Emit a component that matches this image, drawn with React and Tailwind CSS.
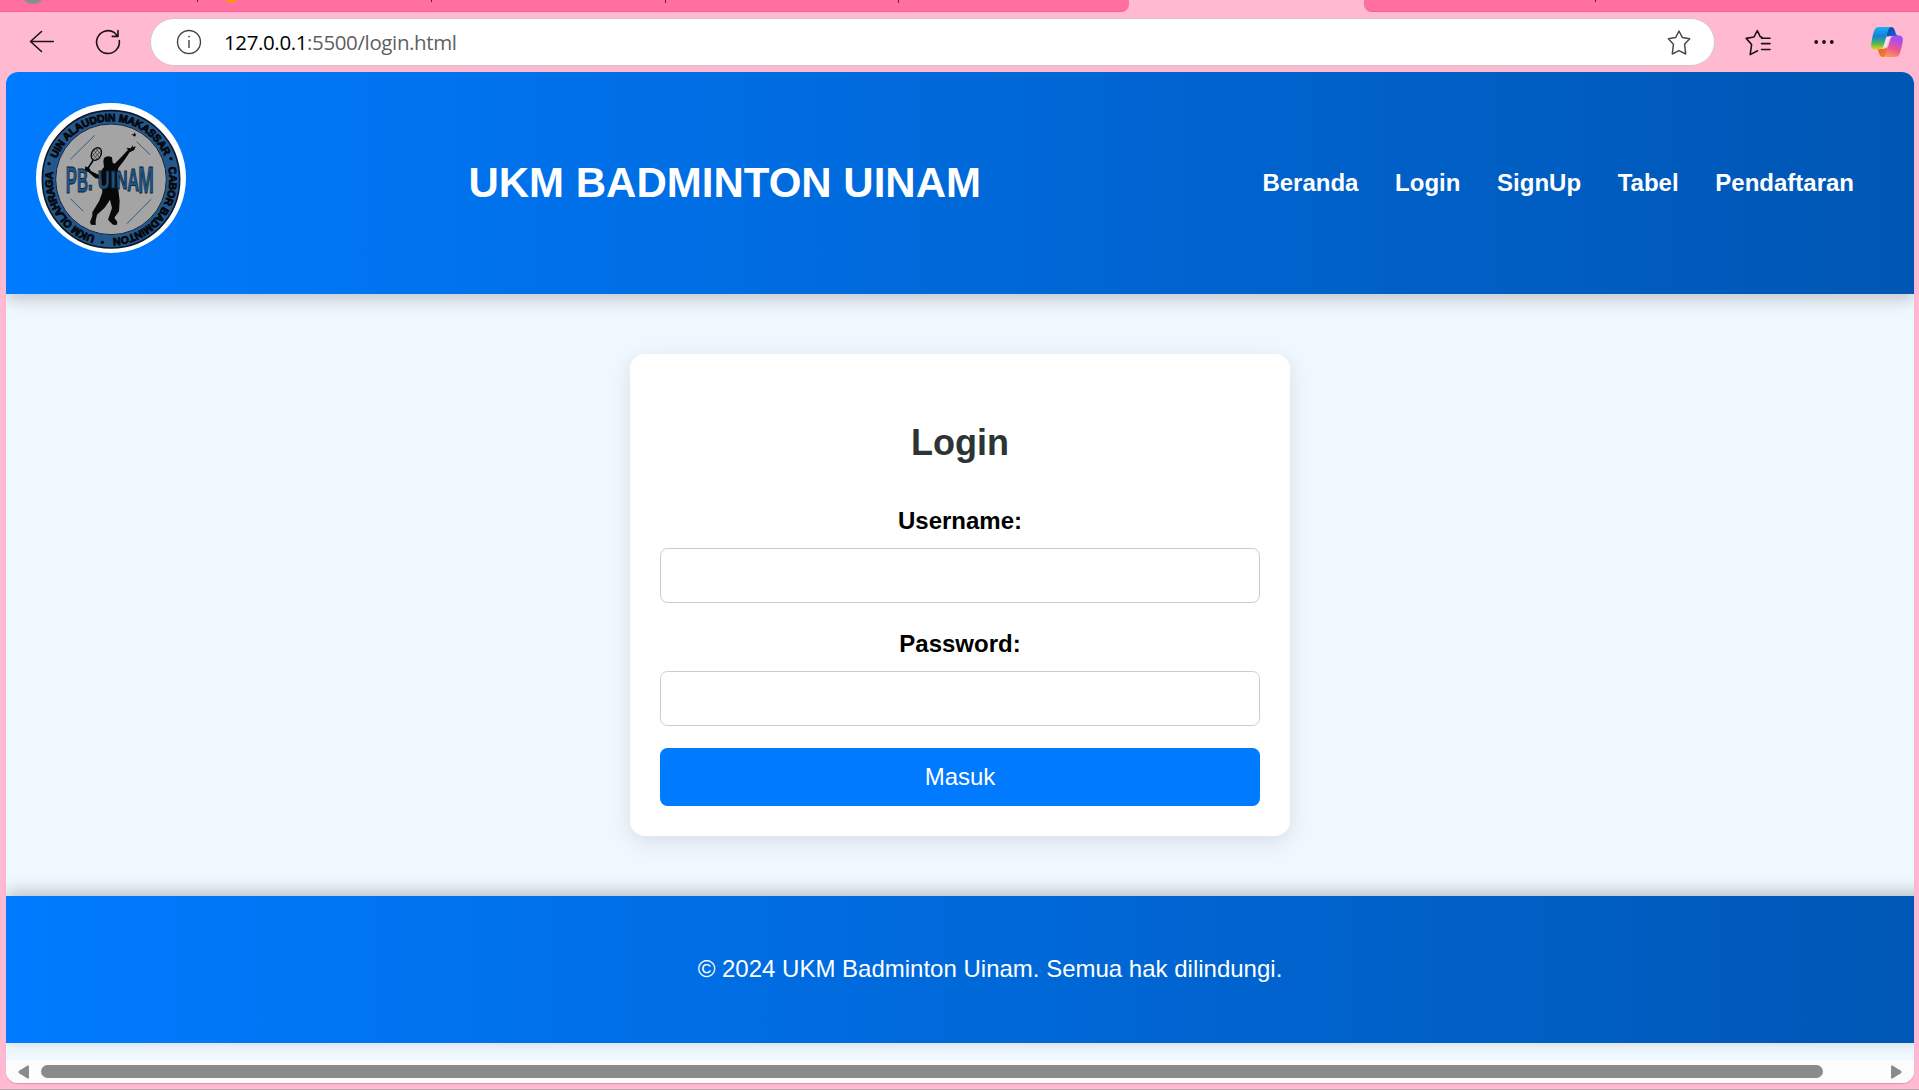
const navItems = ["Beranda", "Login", "SignUp", "Tabel", "Pendaftaran"];

function TabStrip() {
  return (
    <div className="flex h-[12px] shrink-0 justify-between overflow-hidden">
      <div className="relative h-full w-[1129px] rounded-br-[8px] border-b border-[#ff5c93] bg-[#ff6fa0]">
        <span className="absolute left-[21px] top-[-20px] size-[24px] rounded-full bg-[#8c8c8c]" />
        <span className="absolute left-[225px] top-[-9px] size-[12px] rounded-full bg-[#ff9800]" />
        <span className="absolute left-[197px] top-0 h-[2px] w-px bg-[#5a2035]" />
        <span className="absolute left-[431px] top-0 h-[2px] w-px bg-[#5a2035]" />
        <span className="absolute left-[665px] top-0 h-[3px] w-px bg-[#5a2035]" />
        <span className="absolute left-[898px] top-0 h-[3px] w-px bg-[#5a2035]" />
      </div>
      <div className="relative h-full w-[555px] rounded-bl-[8px] border-b border-[#ff5c93] bg-[#ff6fa0]">
        <span className="absolute left-[231px] top-0 h-[2px] w-px bg-[#5a2035]" />
      </div>
    </div>
  );
}

const STAR = "M10 1.2 L13 7 L19.4 8.1 L14.9 12.9 L15.9 21.4 L10 18.4 L4.1 21.4 L5.1 12.9 L0.7 8.1 L7 7 Z";

function CopilotIcon() {
  return (
    <svg viewBox="0 0 34 32" className="h-[32px] w-[34px]">
      <defs>
        <linearGradient id="cpA" x1="0" y1="0" x2="0" y2="1">
          <stop offset="0" stopColor="#18b4ee" />
          <stop offset="0.4" stopColor="#157fd9" />
          <stop offset="0.72" stopColor="#45b860" />
          <stop offset="1" stopColor="#f2cf10" />
        </linearGradient>
        <linearGradient id="cpB" x1="0.3" y1="0" x2="0" y2="1">
          <stop offset="0" stopColor="#a04ef5" />
          <stop offset="0.5" stopColor="#ee5496" />
          <stop offset="1" stopColor="#ffa83e" />
        </linearGradient>
        <linearGradient id="cpC" x1="0" y1="0" x2="1" y2="1">
          <stop offset="0" stopColor="#0a3fae" />
          <stop offset="1" stopColor="#1a6be8" />
        </linearGradient>
        <linearGradient id="cpD" x1="0" y1="0" x2="1" y2="1">
          <stop offset="0" stopColor="#e8502e" />
          <stop offset="1" stopColor="#f58a3c" />
        </linearGradient>
      </defs>
      <path d="M15 1 H21 Q24 1 25 5 L26 8 Q27 10 29 10 H21 Q18 10 17 13 Z" fill="url(#cpC)" />
      <path d="M19 31 H13 Q10 31 9 27 L8.5 25 Q8 23 6 23 H13 Q16 23 17 20 Z" fill="url(#cpD)" />
      <path d="M9 1 H22 Q19 1 18 5 L13.5 20 Q12.5 23.5 9 23.5 H5 Q0.5 23.5 1.2 18 Q2 11 4 5 Q5.3 1 9 1 Z" fill="url(#cpA)" />
      <path d="M25 31 H12 Q15 31 16 27 L20.5 13 Q21.5 9.5 25 9.5 H29 Q33.5 9.5 32.8 15 Q32 21 30 27 Q28.7 31 25 31 Z" fill="url(#cpB)" />
      <path d="M17 10.5 H20.8 Q19.8 11.5 19.3 13 L16.7 21.5 H13.4 Z" fill="#ffe1ec" />
    </svg>
  );
}

function Toolbar() {
  return (
    <div className="flex h-[60px] shrink-0 items-start pl-[28px] pr-[15px] pt-[6px]">
      <svg viewBox="0 0 28 28" className="mt-[10px] size-[28px]" fill="none" stroke="#1b1114" strokeWidth="1.6" strokeLinecap="round" strokeLinejoin="round">
        <path d="M25.3 13.5 H2.5 M13.5 3.5 L2.5 13.5 L13.5 23.5" />
      </svg>
      <svg viewBox="0 0 28 28" className="ml-[38px] mt-[10px] size-[28px]" fill="none" stroke="#1b1114" strokeWidth="1.6" strokeLinecap="round" strokeLinejoin="round">
        <path d="M25.3 12.5 A11.4 11.4 0 1 1 20.5 4.7 L24 8.2 M24 2.5 V8.4 H18.2" />
      </svg>
      <div className="ml-[28px] flex h-[48px] w-[1565px] items-center rounded-full border border-[#d2c8cc] bg-white pl-[25px] pr-[23px]">
        <svg viewBox="0 0 26 26" className="size-[26px]" fill="none" stroke="#444" strokeWidth="1.4">
          <circle cx="13" cy="13" r="11.5" />
          <path d="M13 11 V19" />
          <circle cx="13" cy="7.6" r="0.9" fill="#444" stroke="none" />
        </svg>
        <span className="ml-[22px] whitespace-nowrap font-['Open_Sans','Noto_Sans',sans-serif] text-[20.5px] leading-[28px] tracking-[-0.38px] text-[#5f5f5f]">
          <span className="text-black">127.0.0.1</span>:5500/login.html
        </span>
        <svg viewBox="0 0 24 26" className="ml-auto h-[26px] w-[24px]" fill="none" stroke="#4a4a4a" strokeWidth="1.3" strokeLinejoin="round">
          <path transform="translate(0.6 0.6) scale(1.14)" d={STAR} />
        </svg>
      </div>
      <svg viewBox="0 0 26 28" className="ml-[30px] mt-[11px] h-[28px] w-[26px]" fill="none" stroke="#1b1114" strokeWidth="1.6" strokeLinecap="round" strokeLinejoin="round">
        <path d="M17.2 8.5 L15.2 7.6 L12.3 1.6 L9 8 L1.2 9.4 L6.6 15.5 L5.2 25.6 L12.6 21.8 M16.5 9.3 H25 M16.5 14.6 H25 M16.5 20.5 H25" />
      </svg>
      <svg viewBox="0 0 20 6" className="ml-[43px] mt-[21px] h-[6px] w-[20px]" fill="#1b1114">
        <circle cx="2.2" cy="3" r="1.9" />
        <circle cx="10" cy="3" r="1.9" />
        <circle cx="17.8" cy="3" r="1.9" />
      </svg>
      <div className="ml-auto mt-[8px]">
        <CopilotIcon />
      </div>
    </div>
  );
}

// Letters of the emblem's bow-tie lettering: tall at both ends, short in the middle.
const emblemLetters = [
  { ch: "P", x: 137, y: 307, size: 112, sx: 0.45 },
  { ch: "B", x: 171, y: 303, size: 102, sx: 0.45 },
  { ch: ".", x: 203, y: 299, size: 92, sx: 0.6 },
  { ch: "U", x: 233, y: 294, size: 76, sx: 0.66 },
  { ch: "I", x: 270, y: 293, size: 74, sx: 0.95 },
  { ch: "N", x: 289, y: 295, size: 78, sx: 0.6 },
  { ch: "A", x: 322, y: 300, size: 94, sx: 0.52 },
  { ch: "M", x: 355, y: 306, size: 112, sx: 0.5 },
];

function Logo() {
  const ring = { fontFamily: '"Liberation Sans", Arial, sans-serif', fontWeight: 700, fontSize: 32, fill: "#05080c", stroke: "#05080c", strokeWidth: 2.4 };
  return (
    <svg viewBox="48 37 450 450" className="size-[150px] shrink-0">
      <defs>
        <path id="ringText" d="M273 442 A175 175 0 0 1 273 92 A175 175 0 0 1 273 442" />
      </defs>
      <circle cx="273" cy="262" r="225" fill="#fff" />
      <circle cx="273" cy="266" r="206" fill="#24578b" stroke="#0b1a2a" strokeWidth="5" />
      <circle cx="273" cy="266" r="166" fill="#a4a4a4" stroke="#10263e" strokeWidth="3" />
      <text style={ring} textLength="250"><textPath href="#ringText" startOffset="48">UKM OLAHRAGA</textPath></text>
      <text style={ring} textLength="413"><textPath href="#ringText" startOffset="339">UIN ALAUDDIN MAKASSAR</textPath></text>
      <text style={ring} textLength="307"><textPath href="#ringText" startOffset="787">CABOR BADMINTON</textPath></text>
      <circle cx="87" cy="219" r="5" fill="#05080c" />
      <circle cx="453" cy="204" r="5" fill="#05080c" />
      <circle cx="247" cy="455" r="5" fill="#05080c" />
      <g stroke="#1e4f80" strokeWidth="2.6">
        <path d="M151 206 L224 134 M350 153 L390 192 M151 324 L190 362 M321 399 L393 326" />
      </g>
      <g fill="none" stroke="#080808">
        <ellipse cx="229" cy="190" rx="14" ry="20" transform="rotate(28 229 190)" strokeWidth="4" />
        <path d="M219 176 L240 203 M226 172 L244 193 M215 186 L234 207 M215 200 L236 173 M220 206 L243 180" strokeWidth="1.5" />
        <path d="M220 208 L202 236" strokeWidth="5" />
      </g>
      <path fill="#080808" d="M196 227 L207 231 L213 241 L237 253 L247 235 L252 229 L250 212 L252 202 Q262 192 276 200 L278 216 L284 219 L304 199 L324 177 L319 171 L332 173 L339 162 L338 170 L347 167 L343 178 L329 185 L314 207 L295 232 L291 253 L294 290 L299 330 L297 362 L283 381 L292 394 L290 403 L279 402 L264 387 L276 352 L270 327 L254 351 L231 372 L227 391 L227 403 L213 402 L210 394 L217 376 L217 365 L238 330 L247 305 L244 265 L226 263 L205 244 L194 240 Z" />
      <path fill="#080808" d="M333 132 L342 130 L344 125 L348 134 L343 138 L339 134 Z" />
      <g fill="#1f558a" stroke="#0c2438" strokeWidth="3" style={{ fontFamily: '"Liberation Sans", Arial, sans-serif', fontWeight: 700 }}>
        {emblemLetters.map((l) => (
          <text key={l.ch} transform={`translate(${l.x} ${l.y}) scale(${l.sx} 1)`} fontSize={l.size}>{l.ch}</text>
        ))}
      </g>
    </svg>
  );
}

function Field({ label, type }) {
  return (
    <label className="flex flex-col text-center">
      <span className="text-[24px] font-bold leading-[28px] text-black">{label}</span>
      <input type={type} className="mt-[13px] h-[55px] w-full rounded-[7.5px] border border-[#ccc] bg-white px-[15px] text-[24px]" />
    </label>
  );
}

function LoginCard() {
  return (
    <form className="mx-auto mt-[60px] flex h-[482px] w-[660px] flex-col rounded-[15px] bg-white px-[30px] pt-[68px] shadow-[0_6px_22px_rgba(0,0,0,0.1)]">
      <h2 className="text-center text-[36px] font-bold leading-[42px] text-[#2d3436]">Login</h2>
      <div className="mt-[43px] flex flex-col gap-[27px]">
        <Field label="Username:" type="text" />
        <Field label="Password:" type="password" />
      </div>
      <button type="button" className="mt-[22px] h-[58px] rounded-[7.5px] bg-[#007bff] text-[24px] text-white">Masuk</button>
    </form>
  );
}

function ScrollBar() {
  return (
    <div className="relative z-10 flex h-[23px] shrink-0 items-center bg-[#fcfcfc] pl-[12px] pr-[12px]">
      <svg viewBox="0 0 11 14" className="h-[14px] w-[11px]" fill="#8a8a8a">
        <path d="M9.5 0.5 Q11 0 11 1.5 V12.5 Q11 14 9.5 13.5 L0.8 8 Q0 7 0.8 6 Z" />
      </svg>
      <div className="ml-[12px] h-[13px] w-[1782px] rounded-full bg-[#8a8a8a]" />
      <svg viewBox="0 0 11 14" className="ml-auto h-[14px] w-[11px]" fill="#8a8a8a">
        <path d="M1.5 0.5 Q0 0 0 1.5 V12.5 Q0 14 1.5 13.5 L10.2 8 Q11 7 10.2 6 Z" />
      </svg>
    </div>
  );
}

export default function App() {
  return (
    <div className="flex h-[1090px] w-[1919px] flex-col overflow-hidden border-b border-[#b5a9ad] bg-[#ffbad2] font-['Liberation_Sans',Arial,sans-serif]">
      <TabStrip />
      <Toolbar />
      <div className="ml-[6px] flex h-[1011px] w-[1908px] shrink-0 flex-col overflow-hidden rounded-[12px] bg-[#f0f8ff] shadow-[0_1px_1px_#d993ab]">
        <header className="flex h-[222px] shrink-0 items-center justify-between bg-[linear-gradient(to_right,#007bff,#0056b3)] px-[30px] shadow-[0_6px_15px_rgba(0,0,0,0.2)]">
          <div className="pb-[10px] pr-[31px]">
            <Logo />
          </div>
          <h1 className="whitespace-nowrap text-[42px] font-bold leading-[48px] text-white">UKM BADMINTON UINAM</h1>
          <nav className="flex gap-[36.67px] px-[30px] text-[24px] font-bold leading-[28px] text-white">
            {navItems.map((item) => (
              <a key={item}>{item}</a>
            ))}
          </nav>
        </header>
        <main className="h-[602px] shrink-0">
          <LoginCard />
        </main>
        <footer className="flex h-[147px] w-[1968px] shrink-0 items-center justify-center bg-[linear-gradient(to_right,#007bff,#0056b3)] pb-[2px] text-[24px] text-white shadow-[0_-4px_15px_rgba(0,0,0,0.24)]">
          <p>© 2024 UKM Badminton Uinam. Semua hak dilindungi.</p>
        </footer>
        <div className="h-[17px] shrink-0" />
        <ScrollBar />
      </div>
    </div>
  );
}
